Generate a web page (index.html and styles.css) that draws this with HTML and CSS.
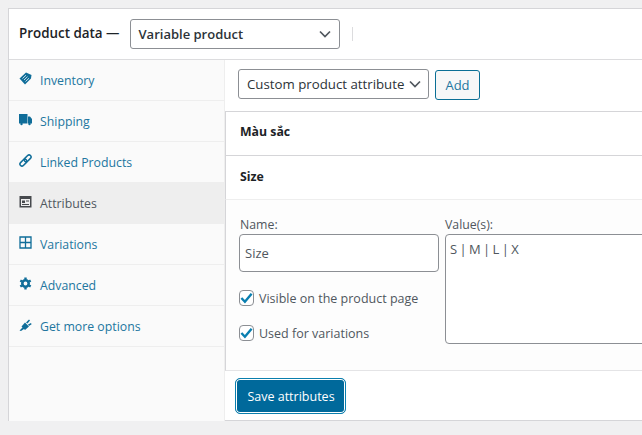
FILE: index.html
```html
<!DOCTYPE html>
<html lang="en">
<head>
    <meta charset="UTF-8">
    <meta name="viewport" content="width=device-width, initial-scale=1.0">
    <title>Product data</title>
    <link rel="stylesheet" href="styles.css">
</head>
<body>

    <div class="panel">
        <div class="panel-head">
            <span class="panel-title">Product data —</span>
            <div class="select select-type">
                <span>Variable product</span>
                <svg class="chevron" width="12" height="8" viewBox="0 0 12 8"><path d="M1 1.500l5 5 5-5" fill="none" stroke="currentColor" stroke-width="1.700"/></svg>
            </div>
            <span class="head-divider"></span>
        </div>

        <div class="panel-body">
            <ul class="tabs">
                <li class="tab">
                    <svg class="tab-icon" viewBox="0 0 13 13"><path d="M0.500 6.500L7 0.500l5.500 2.500-.5 3.500-6 6z"/><path d="M3.500 6.500L7 3.200M5 8l3.500-3.300M6.500 9.500L10 6.200" stroke="#fafafa" stroke-width=".8" fill="none"/></svg>
                    <a>Inventory</a>
                </li>
                <li class="tab">
                    <svg class="tab-icon" viewBox="0 0 13 13"><path d="M0 1h8.500v9.500H0zM9 3.500h2L13 6v4.500H9z"/><circle cx="2.500" cy="11" r="1.200"/><circle cx="10.500" cy="11" r="1.200"/></svg>
                    <a>Shipping</a>
                </li>
                <li class="tab">
                    <svg class="tab-icon" viewBox="0 0 13 13"><g transform="rotate(-45 6.500 6.500)" fill="none" stroke="currentColor" stroke-width="1.500"><rect x="-0.500" y="4.500" width="8" height="4" rx="2"/><rect x="5.500" y="4.500" width="8" height="4" rx="2"/></g></svg>
                    <a>Linked Products</a>
                </li>
                <li class="tab tab-active">
                    <svg class="tab-icon" viewBox="0 0 13 13"><path fill-rule="evenodd" d="M0.500 1h12v11.500H.500zM2 4v7h9V4zM3 5.500h3v2.500H3zM7 5.500h3v1H7zM3 9h7v1H3z"/></svg>
                    <a>Attributes</a>
                </li>
                <li class="tab">
                    <svg class="tab-icon" viewBox="0 0 13 13"><path d="M1 1h11v11H1zM6.500 1v11M1 6.500h11" fill="none" stroke="currentColor" stroke-width="1.300"/></svg>
                    <a>Variations</a>
                </li>
                <li class="tab">
                    <svg class="tab-icon" viewBox="0 0 13 13"><circle cx="6.500" cy="6.500" r="3.200" fill="none" stroke="currentColor" stroke-width="2.600"/><path d="M6.500 0.500v2M6.500 10.500v2M1.300 3.500l1.700 1M10 8.500l1.700 1M1.300 9.500l1.700-1M10 4.500l1.700-1" stroke="currentColor" stroke-width="2.400"/></svg>
                    <a>Advanced</a>
                </li>
                <li class="tab">
                    <svg class="tab-icon" viewBox="0 0 13 13"><path d="M0.500 12.500l3-3-1-1L6 4.500l4 4-4 3.500-1-1-3 2z"/><path d="M7 4.500L10 1.500l1 1-2.500 3zM9 6.500L12 5l.6 1.200-2.600 1.800z"/></svg>
                    <a>Get more options</a>
                </li>
            </ul>

            <div class="content">
                <div class="toolbar">
                    <div class="select select-attr">
                        <span>Custom product attribute</span>
                        <svg class="chevron" width="12" height="8" viewBox="0 0 12 8"><path d="M1 1.500l5 5 5-5" fill="none" stroke="currentColor" stroke-width="1.700"/></svg>
                    </div>
                    <button class="btn-add">Add</button>
                </div>

                <div class="attr-row"><strong>Màu sắc</strong></div>
                <div class="attr-row attr-open"><strong>Size</strong></div>

                <div class="attr-form">
                    <div class="attr-left">
                        <label class="field-label">Name:</label>
                        <div class="input">Size</div>
                        <div class="check-row check-first">
                            <span class="check"><svg width="14" height="12" viewBox="0 0 14 12"><path d="M1.500 6l3.800 4L12.500 1.500" fill="none" stroke="#0a7fb0" stroke-width="2.600"/></svg></span>
                            <span>Visible on the product page</span>
                        </div>
                        <div class="check-row">
                            <span class="check"><svg width="14" height="12" viewBox="0 0 14 12"><path d="M1.500 6l3.800 4L12.500 1.500" fill="none" stroke="#0a7fb0" stroke-width="2.600"/></svg></span>
                            <span>Used for variations</span>
                        </div>
                    </div>
                    <div class="attr-right">
                        <label class="field-label">Value(s):</label>
                        <div class="textarea">S | M | L | X</div>
                    </div>
                </div>

                <div class="save-row">
                    <button class="btn-save">Save attributes</button>
                </div>
            </div>
        </div>
    </div>

</body>
</html>
```

FILE: styles.css
```css
html, body {
    margin: 0;
    height: 435px;
    overflow: hidden;
}

body {
    font-family: 'Open Sans', 'Noto Sans', sans-serif;
    font-size: 13px;
    background-color: #f0f0f1;
    color: #50575e;
    padding: 8px 0 0 8px;
    box-sizing: border-box;
}

.panel {
    width: 800px;
    height: 413px;
    background-color: white;
    border: 1px solid #d5d5d8;
    box-sizing: border-box;
}

.panel-head {
    display: flex;
    align-items: center;
    height: 50px;
    padding-left: 10px;
    border-bottom: 1px solid #dcdcde;
}

.panel-title {
    font-size: 13.400px;
    font-weight: 600;
    color: #1d2327;
    margin-top: -3px;
    margin-right: 10px;
}

.select {
    display: flex;
    align-items: center;
    justify-content: space-between;
    box-sizing: border-box;
    height: 30px;
    background-color: white;
    border: 1px solid #8c8f94;
    border-radius: 3px;
    color: #2c3338;
    padding: 0 8px;
}

.select-type {
    width: 210px;
    font-weight: 600;
}

.select-attr {
    width: 191px;
    padding-right: 7px;
    font-size: 13.250px;
}

.chevron {
    color: #50575e;
    flex-shrink: 0;
}

.head-divider {
    width: 1px;
    height: 14px;
    margin-left: 12px;
    background-color: #dcdcde;
}

.panel-body {
    display: flex;
    height: 361px;
}

.tabs {
    list-style: none;
    margin: 0;
    padding: 0;
    width: 215px;
    flex-shrink: 0;
    background-color: #fafafa;
    border-right: 1px solid #eee;
}

.tab {
    display: flex;
    align-items: center;
    height: 41px;
    box-sizing: border-box;
    padding-left: 10px;
    border-bottom: 1px solid #eee;
    color: #0f6d99;
}

.tab a {
    color: #22769f;
    font-size: 12.300px;
    margin-left: 8px;
    white-space: nowrap;
}

.tab-icon {
    width: 13px;
    height: 13px;
    fill: currentColor;
    margin-top: -3px;
    flex-shrink: 0;
}

.tab-active {
    background-color: #eee;
    color: #46494d;
}

.tab-active a {
    color: #50575e;
}

.content {
    flex: 1;
    min-width: 0;
}

.toolbar {
    display: flex;
    align-items: flex-start;
    height: 51px;
    padding: 9px 0 0 13px;
    box-sizing: border-box;
}

.btn-add {
    font-family: inherit;
    font-size: 13px;
    width: 45px;
    height: 30px;
    margin: 1px 0 0 6px;
    padding: 0;
    background-color: #f6f7f7;
    border: 1px solid #0a6f95;
    border-radius: 3px;
    color: #22769f;
}

.attr-row {
    display: flex;
    align-items: center;
    height: 44px;
    padding: 0 0 4px 14px;
    box-sizing: border-box;
    border-top: 1px solid #d5d5d8;
    border-left: 1px solid #d5d5d8;
    font-size: 12.300px;
    color: #1d2327;
}

.attr-open {
    border-bottom: 1px solid #eee;
    height: 45px;
    padding-bottom: 2px;
}

.attr-form {
    display: flex;
    gap: 6px;
    height: 171px;
    padding: 16px 0 0 13px;
    box-sizing: border-box;
    background-color: #fdfdfd;
    border-left: 1px solid #d5d5d8;
    border-bottom: 1px solid #e4e4e6;
}

.attr-left {
    width: 200px;
    flex-shrink: 0;
}

.attr-right {
    flex: 1;
}

.field-label {
    display: block;
    font-size: 12.300px;
    line-height: 18px;
}

.attr-left .field-label {
    margin-left: 1px;
}

.input {
    box-sizing: border-box;
    height: 38px;
    padding: 0 5px;
    line-height: 36px;
    background-color: white;
    border: 1px solid #8c8f94;
    border-radius: 4px;
    color: #50575e;
}

.textarea {
    box-sizing: border-box;
    height: 110px;
    padding: 3px 4px;
    line-height: 22px;
    word-spacing: -1px;
    background-color: white;
    border: 1px solid #8c8f94;
    border-radius: 4px;
    color: #50575e;
}

.check-row {
    display: flex;
    align-items: center;
    gap: 5px;
    height: 16px;
    margin-top: 19px;
    font-size: 12.500px;
}

.check-first {
    margin-top: 18px;
}

.check {
    display: flex;
    align-items: center;
    justify-content: center;
    box-sizing: border-box;
    width: 15px;
    height: 16px;
    background-color: white;
    border: 1px solid #8c8f94;
    border-radius: 4px;
    flex-shrink: 0;
}

.save-row {
    padding: 7px 0 0 10px;
}

.btn-save {
    font-family: inherit;
    font-size: 12.500px;
    width: 111px;
    height: 36px;
    padding: 1px 0 0 1px;
    background-color: #00699b;
    border: 1px solid #0a7fae;
    box-shadow: inset 0 0 0 1px white;
    border-radius: 5px;
    color: white;
}
```
